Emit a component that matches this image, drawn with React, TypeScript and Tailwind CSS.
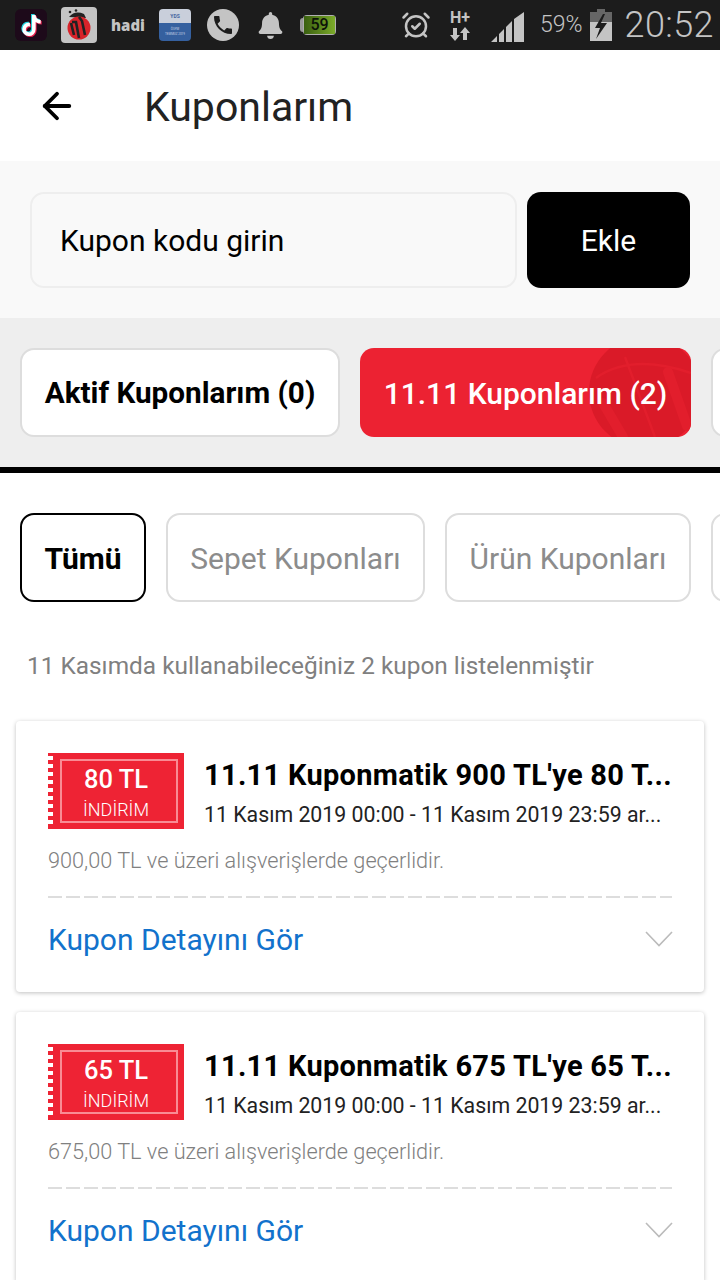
import { AlarmClockCheck, ArrowLeft } from 'lucide-react';
import { FaBell, FaTiktok } from 'react-icons/fa';
import { MdPhone } from 'react-icons/md';

const coupons = [
  { amount: '80 TL', title: "11.11 Kuponmatik 900 TL'ye 80 T...", min: '900,00 TL ve üzeri alışverişlerde geçerlidir.' },
  { amount: '65 TL', title: "11.11 Kuponmatik 675 TL'ye 65 T...", min: '675,00 TL ve üzeri alışverişlerde geçerlidir.' },
];

function Ladybug() {
  return (
    <div className="w-9 h-9 rounded-sm bg-[#c4c4c4] shrink-0">
      <svg viewBox="0 0 36 36" className="w-9 h-9">
        <circle cx="9" cy="5" r="1.3" fill="#222" />
        <circle cx="15" cy="3.5" r="1.3" fill="#222" />
        <path d="M8 10 Q14 3 23 7 L25 11z" fill="#222" />
        <circle cx="18" cy="21" r="11.5" fill="#d8232a" />
        <path d="M18 10 L21 14 L24 28 M11 15 L15 15 L18 31 M10 16 L13 28" stroke="#222" strokeWidth="2.6" fill="none" />
      </svg>
    </div>
  );
}

function StatusBar() {
  return (
    <div className="h-[50px] bg-[#1c1c1c] flex items-center text-[#c4c4c4] relative shrink-0">
      <div className="ml-[15px] w-8 h-8 rounded-md bg-[#1d0a1a] flex items-center justify-center">
        <FaTiktok className="w-[21px] h-[21px] text-white" style={{ filter: 'drop-shadow(-1px -1px 0 #25d5e0) drop-shadow(1px 1px 0 #e8204f)' }} />
      </div>
      <div className="ml-[14px]">
        <Ladybug />
      </div>
      <span className="ml-[14px] w-[34px] text-[15px] font-extrabold leading-none font-['Open_Sans',sans-serif]">hadi</span>
      <div className="ml-[14px] w-8 h-8 rounded-sm overflow-hidden flex flex-col">
        <div className="h-[14px] bg-[#c9cfdb] text-[5px] font-bold text-[#4564a0] text-center leading-[14px]">YDS</div>
        <div className="flex-1 bg-[#35609f] text-[3px] text-center text-[#c9d4e6] leading-[5px] pt-1">ÖSYM<br />TEMMUZ 2019</div>
      </div>
      <div className="ml-[16px] w-8 h-8 rounded-full bg-[#c4c4c4] flex items-center justify-center">
        <MdPhone className="w-6 h-6 text-[#1c1c1c]" />
      </div>
      <FaBell className="ml-[19px] w-[25px] h-[27px]" />
      <div className="ml-[17px] flex items-center">
        <div className="w-[3px] h-[14px] bg-[#9a9a9a] rounded-l-sm" />
        <div className="w-[33px] h-[20px] p-[1px] bg-[#b0b0b0] rounded-sm flex">
          <div className="flex-1 bg-gradient-to-r from-[#3a6010] to-[#7cab2a] text-[#0c1208] text-[16px] leading-[18px] text-center font-medium">59</div>
        </div>
      </div>
      <AlarmClockCheck className="ml-[65px] w-[30px] h-[30px]" strokeWidth={2} />
      <div className="ml-[17px] w-6 flex flex-col items-center leading-none font-bold">
        <span className="text-[16px] leading-[17px]">H+</span>
        <div className="flex h-[15px] items-center">
          <svg viewBox="0 0 20 14" className="w-5 h-[14px]" fill="#c4c4c4">
            <path d="M5 14 L0 8 H3 V1 H7 V8 H10 Z M15 0 L20 6 H17 V13 H13 V6 H10 Z" />
          </svg>
        </div>
      </div>
      <svg viewBox="0 0 34 30" className="ml-[19px] w-[34px] h-[30px] mt-[3px]" fill="#c4c4c4">
        <path d="M0 30 L6 24 V30Z M8 22 L13 17 V30 H8Z M15 15 L21 9 V30 H15Z M23 7 L33 0 V30 H23Z" />
      </svg>
      <span className="ml-[15px] text-[23px] font-light">59%</span>
      <svg viewBox="0 0 22 32" className="ml-[7px] w-[22px] h-8">
        <path d="M7 0 H15 V3 H22 V32 H0 V3 H7Z" fill="#666" />
        <path d="M0 13 H22 V32 H0Z" fill="#c4c4c4" />
        <path d="M13 5 L5 19 H10 L6 30 L17 14 H11 L15 5Z" fill="#1c1c1c" />
      </svg>
      <span className="ml-[13px] text-[36px] font-light tracking-[0.4px]">20:52</span>
    </div>
  );
}

function CouponCard({ amount, title, min }: { amount: string; title: string; min: string }) {
  return (
    <div className="bg-white rounded-[4px] shadow-[0_1px_4px_rgba(0,0,0,0.25)] h-[271px] px-8 shrink-0">
      <div className="flex pt-8">
        <div className="w-[136px] h-[76px] bg-[#ee2334] relative shrink-0 p-[6px] pl-3">
          <div className="absolute left-0 top-[3px] bottom-[3px] w-[5px] bg-[repeating-linear-gradient(to_bottom,#fff_0,#fff_4px,transparent_4px,transparent_8px)]" />
          <div className="w-full h-full border-2 border-[#f98b94] flex flex-col items-center text-white pr-[6px]">
            <span className="text-[25.5px] leading-[36px] font-medium">{amount}</span>
            <span className="text-[18px] leading-[25px] font-light">İNDİRİM</span>
          </div>
        </div>
        <div className="ml-[21px] min-w-0 flex-1 -translate-x-[1px]">
          <div className="text-[29px] leading-[44px] font-bold text-black whitespace-nowrap tracking-[0.3px]">{title}</div>
          <div className="text-[21.3px] leading-[36px] text-[#222] whitespace-nowrap">11 Kasım 2019 00:00 - 11 Kasım 2019 23:59 ar...</div>
        </div>
      </div>
      <div className="mt-[12px] text-[21.7px] leading-[32px] font-light text-[#808080]">{min}</div>
      <div className="mt-[19px] h-[2px] bg-[repeating-linear-gradient(to_right,#ddd_0,#ddd_14px,transparent_14px,transparent_18px)]" />
      <div className="flex items-center justify-between h-[82px]">
        <span className="text-[30px] text-[#1272cc]">Kupon Detayını Gör</span>
        <svg viewBox="0 0 28 16" className="w-7 h-4 -mr-[1px]" fill="none" stroke="#bbb" strokeWidth="1.6">
          <path d="M1 1 L14 14.5 L27 1" />
        </svg>
      </div>
    </div>
  );
}

export default function App() {
  return (
    <div className="w-[720px] h-[1280px] overflow-hidden flex flex-col bg-white font-['Roboto',sans-serif]">
      <StatusBar />

      <div className="h-[111px] bg-white flex items-center shrink-0">
        <ArrowLeft className="ml-[36px] w-[42px] h-[42px] text-black" strokeWidth={2.2} />
        <h1 className="ml-[66px] mt-[5px] text-[41px] text-[#222] font-normal">Kuponlarım</h1>
      </div>

      <div className="h-[157px] bg-[#f9f9f9] flex items-center px-[30px] gap-[10px] shrink-0">
        <div className="w-[487px] h-[96px] rounded-[14px] border-2 border-[#eeeeee] bg-[#f9f9f9] flex items-center pl-[28px] pt-[1px] text-[30px] text-black">
          Kupon kodu girin
        </div>
        <button className="w-[163px] h-[96px] rounded-[14px] bg-black text-white text-[30px] pt-[1px]">Ekle</button>
      </div>

      <div className="h-[155px] bg-[#eeeeee] border-b-[6px] border-black flex items-center pl-[20px] gap-[20px] overflow-hidden shrink-0">
        <div className="w-[320px] h-[89px] shrink-0 rounded-[14px] border-2 border-[#dddddd] bg-white flex items-center justify-center pt-[1px] text-[29.7px] font-bold text-black">
          Aktif Kuponlarım (0)
        </div>
        <div className="relative w-[331px] h-[89px] shrink-0 rounded-[14px] bg-[#ec2232] overflow-hidden flex items-center justify-center pt-[1px] text-[30px] font-medium text-white">
          <svg viewBox="0 0 110 89" className="absolute right-0 top-0 w-[110px] h-[89px]">
            <circle cx="64" cy="44" r="56" fill="#da1a28" />
            <path d="M15 30 Q50 5 110 25 M44 9 L74 89" stroke="#e21e2c" strokeWidth="2.5" fill="none" />
            <path d="M87 24 L106 78 M22 55 L42 89" stroke="#e21e2c" strokeWidth="10" strokeLinecap="round" fill="none" />
          </svg>
          <span className="relative">11.11 Kuponlarım (2)</span>
        </div>
        <div className="w-[100px] h-[89px] shrink-0 rounded-[14px] border-2 border-[#dddddd] bg-white" />
      </div>

      <div className="flex items-center pl-[20px] gap-[20px] pt-[40px] overflow-hidden shrink-0">
        <div className="w-[126px] h-[89px] shrink-0 rounded-[14px] border-2 border-black flex items-center justify-center pt-[1px] text-[30px] font-bold text-black">
          Tümü
        </div>
        <div className="w-[259px] h-[89px] shrink-0 rounded-[14px] border-2 border-[#dddddd] flex items-center justify-center pt-[1px] text-[30px] text-[#8c8c8c]">
          Sepet Kuponları
        </div>
        <div className="w-[246px] h-[89px] shrink-0 rounded-[14px] border-2 border-[#dddddd] flex items-center justify-center pt-[1px] text-[30px] text-[#8c8c8c]">
          Ürün Kuponları
        </div>
        <div className="w-[100px] h-[89px] shrink-0 rounded-[14px] border-2 border-[#dddddd]" />
      </div>

      <p className="mt-[47px] pl-[27px] text-[24.4px] leading-[34px] text-[#808080]">11 Kasımda kullanabileceğiniz 2 kupon listelenmiştir</p>

      <div className="mt-[38px] mx-[16px] flex flex-col gap-5">
        {coupons.map(c => <CouponCard key={c.amount} {...c} />)}
      </div>
    </div>
  );
}
